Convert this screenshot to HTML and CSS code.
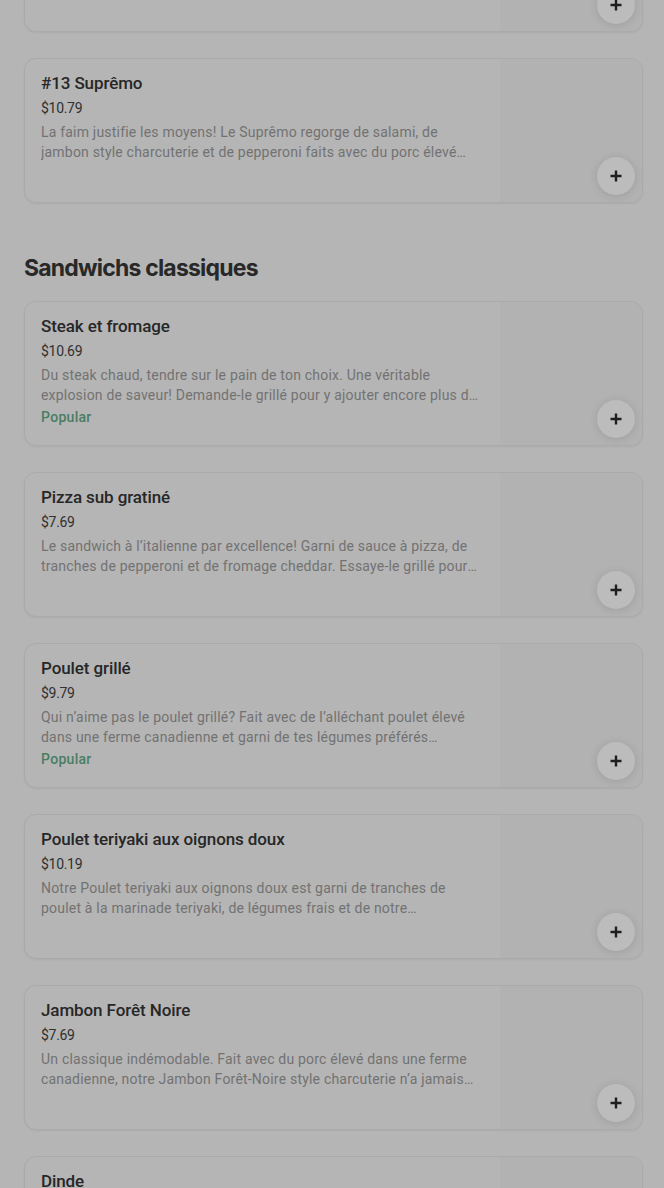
FILE: index.html
```html
<!DOCTYPE html>
<html lang="fr">
<head>
  <meta charset="UTF-8" />
  <meta name="viewport" content="width=device-width, initial-scale=1" />
  <title>Menu</title>
  <link rel="stylesheet" href="styles.css">
</head>
<body>
  <div id="menu">

    <div class="section">
      <div class="item">
        <div class="item-info">
          <div class="item-name">#12 Club</div>
          <div class="item-price">$10.29</div>
          <div class="item-desc">Un classique garni de poulet, de bacon et de jambon style charcuterie avec tes légumes préférés.</div>
        </div>
        <div class="item-pic"></div>
        <button class="add-btn"><svg viewBox="0 0 12 12" width="12" height="12"><path d="M6 0.5v11M0.5 6h11" /></svg></button>
      </div>

      <div class="item">
        <div class="item-info">
          <div class="item-name">#13 Suprêmo</div>
          <div class="item-price">$10.79</div>
          <div class="item-desc">La faim justifie les moyens! Le Suprêmo regorge de salami, de jambon style charcuterie et de pepperoni faits avec du porc élevé…</div>
        </div>
        <div class="item-pic"></div>
        <button class="add-btn"><svg viewBox="0 0 12 12" width="12" height="12"><path d="M6 0.5v11M0.5 6h11" /></svg></button>
      </div>
    </div>

    <div class="section">
      <h2 class="section-title">Sandwichs classiques</h2>

      <div class="item">
        <div class="item-info">
          <div class="item-name">Steak et fromage</div>
          <div class="item-price">$10.69</div>
          <div class="item-desc">Du steak chaud, tendre sur le pain de ton choix. Une véritable explosion de saveur! Demande-le grillé pour y ajouter encore plus de goût.</div>
          <div class="item-tag">Popular</div>
        </div>
        <div class="item-pic"></div>
        <button class="add-btn"><svg viewBox="0 0 12 12" width="12" height="12"><path d="M6 0.5v11M0.5 6h11" /></svg></button>
      </div>

      <div class="item">
        <div class="item-info">
          <div class="item-name">Pizza sub gratiné</div>
          <div class="item-price">$7.69</div>
          <div class="item-desc">Le sandwich à l’italienne par excellence! Garni de sauce à pizza, de tranches de pepperoni et de fromage cheddar. Essaye-le grillé pour un goût encore meilleur.</div>
        </div>
        <div class="item-pic"></div>
        <button class="add-btn"><svg viewBox="0 0 12 12" width="12" height="12"><path d="M6 0.5v11M0.5 6h11" /></svg></button>
      </div>

      <div class="item">
        <div class="item-info">
          <div class="item-name">Poulet grillé</div>
          <div class="item-price">$9.79</div>
          <div class="item-desc">Qui n’aime pas le poulet grillé? Fait avec de l’alléchant poulet élevé dans une ferme canadienne et garni de tes légumes préférés…</div>
          <div class="item-tag">Popular</div>
        </div>
        <div class="item-pic"></div>
        <button class="add-btn"><svg viewBox="0 0 12 12" width="12" height="12"><path d="M6 0.5v11M0.5 6h11" /></svg></button>
      </div>

      <div class="item">
        <div class="item-info">
          <div class="item-name">Poulet teriyaki aux oignons doux</div>
          <div class="item-price">$10.19</div>
          <div class="item-desc">Notre Poulet teriyaki aux oignons doux est garni de tranches de poulet à la marinade teriyaki, de légumes frais et de notre…</div>
        </div>
        <div class="item-pic"></div>
        <button class="add-btn"><svg viewBox="0 0 12 12" width="12" height="12"><path d="M6 0.5v11M0.5 6h11" /></svg></button>
      </div>

      <div class="item">
        <div class="item-info">
          <div class="item-name">Jambon Forêt Noire</div>
          <div class="item-price">$7.69</div>
          <div class="item-desc">Un classique indémodable. Fait avec du porc élevé dans une ferme canadienne, notre Jambon Forêt-Noire style charcuterie n’a jamais été aussi bon.</div>
        </div>
        <div class="item-pic"></div>
        <button class="add-btn"><svg viewBox="0 0 12 12" width="12" height="12"><path d="M6 0.5v11M0.5 6h11" /></svg></button>
      </div>

      <div class="item">
        <div class="item-info">
          <div class="item-name">Dinde</div>
          <div class="item-price">$8.29</div>
          <div class="item-desc">De la dinde tranchée mince, servie sur le pain de ton choix avec tes légumes préférés.</div>
        </div>
        <div class="item-pic"></div>
        <button class="add-btn"><svg viewBox="0 0 12 12" width="12" height="12"><path d="M6 0.5v11M0.5 6h11" /></svg></button>
      </div>
    </div>

  </div>
</body>
</html>
```

FILE: styles.css
```css
html, body {
  margin: 0;
  padding: 0;
  height: 100%;
  background: #b5b5b5;
  font-family: Roboto, 'Liberation Sans', Arial, sans-serif;
  overflow: hidden;
}

#menu {
  padding: 0 21px 0 24px;
  margin-top: -113px;
}

.section {
  display: flex;
  flex-direction: column;
  gap: 26px;
}

.section-title {
  margin: 49px 0 -9px 0;
  font-family: Inter, 'Liberation Sans', sans-serif;
  font-size: 23px;
  font-weight: 700;
  line-height: 32px;
  letter-spacing: -0.8px;
  color: #282828;
}

.item {
  position: relative;
  display: flex;
  height: 145px;
  box-sizing: border-box;
  border: 1px solid #aaaaaa;
  border-radius: 12px;
  background: #b5b5b5;
  overflow: hidden;
  box-shadow: 0 1px 2px rgba(0, 0, 0, 0.05);
}

.item-info {
  flex: 1;
  padding: 14px 21px 0 16px;
  min-width: 0;
}

.item-name {
  font-size: 17px;
  font-weight: 500;
  line-height: 20px;
  color: #272727;
  letter-spacing: -0.1px;
}

.item-price {
  margin-top: 5px;
  font-size: 14px;
  line-height: 20px;
  color: #303030;
  letter-spacing: -0.3px;
}

.item-desc {
  margin-top: 4px;
  font-size: 14px;
  line-height: 20px;
  color: #727272;
  letter-spacing: 0.2px;
  display: -webkit-box;
  -webkit-line-clamp: 2;
  -webkit-box-orient: vertical;
  overflow: hidden;
}

.item-tag {
  margin-top: 2px;
  font-size: 14px;
  font-weight: 500;
  line-height: 20px;
  letter-spacing: 0.3px;
  color: #4a7d63;
}

.item-pic {
  width: 142px;
  flex-shrink: 0;
  background: #b2b2b2;
}

.add-btn {
  position: absolute;
  right: 7px;
  bottom: 7px;
  width: 38px;
  height: 38px;
  border: none;
  border-radius: 50%;
  background: #bcbcbc;
  box-shadow: 0 1px 8px rgba(0, 0, 0, 0.12);
  padding: 0;
  display: flex;
  align-items: center;
  justify-content: center;
}

.add-btn svg path {
  stroke: #1e1e1e;
  stroke-width: 2.4;
  fill: none;
}
```
